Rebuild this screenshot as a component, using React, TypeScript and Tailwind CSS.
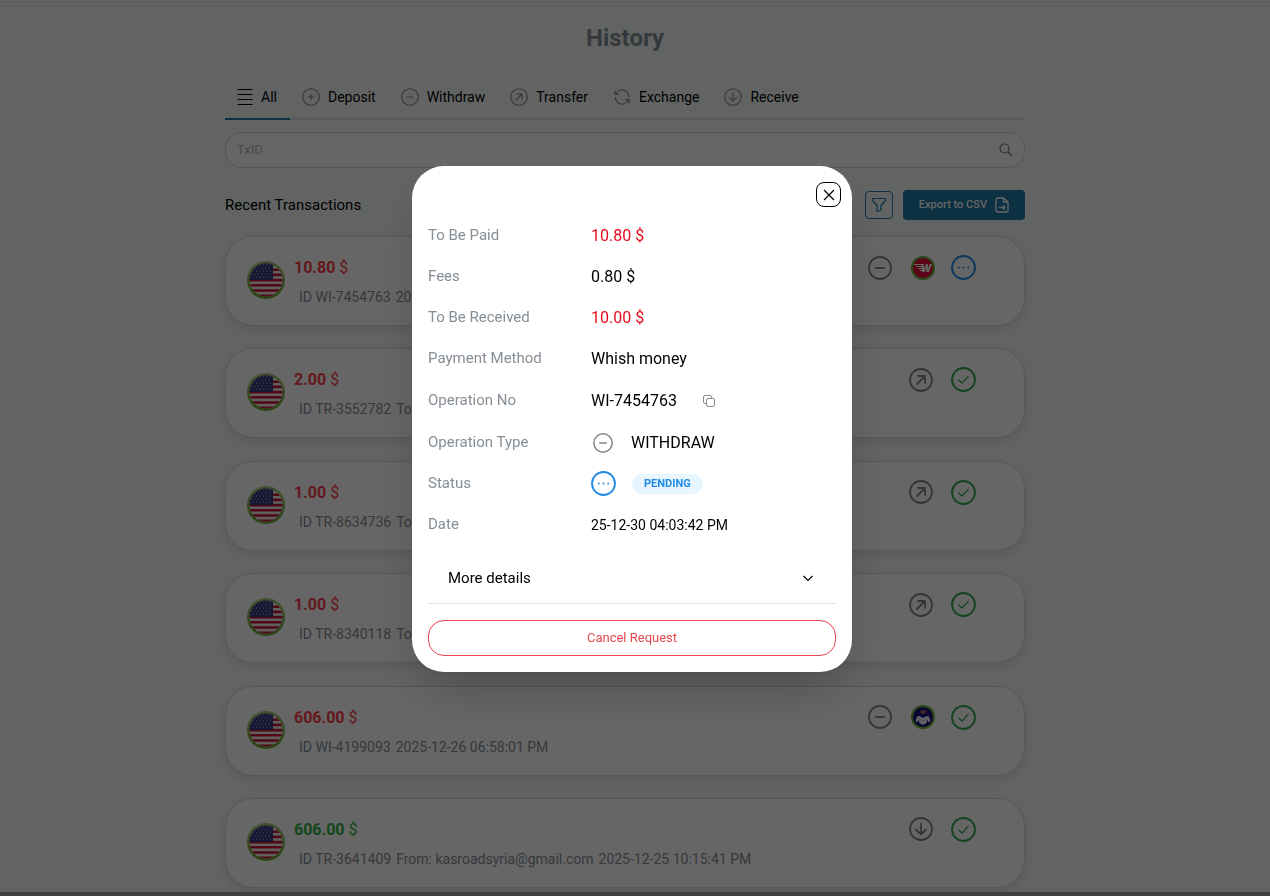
import type { ReactNode } from "react";
import { clsx } from "clsx";

type IconProps = { className?: string };

function Ring({ className, weight = 1.5, children }: IconProps & { weight?: number; children: ReactNode }) {
  return (
    <svg
      viewBox="0 0 24 24"
      className={className}
      fill="none"
      stroke="currentColor"
      strokeWidth={weight}
      strokeLinecap="round"
      strokeLinejoin="round"
      aria-hidden="true"
    >
      <circle cx="12" cy="12" r="11" />
      {children}
    </svg>
  );
}

const glyphs = {
  plus: <path d="M8 12h8M12 8v8" />,
  minus: <path d="M8 12h8" />,
  upRight: <path d="M8 16l8-8M9 8h7v7" />,
  down: <path d="M12 6.5v11M7 12.5l5 5 5-5" />,
};

type Glyph = keyof typeof glyphs;

function MenuIcon() {
  return (
    <svg viewBox="0 0 16 18" className="h-[18px] w-4" fill="none" stroke="#000" strokeWidth="1.2" aria-hidden="true">
      <path d="M.5 1.5h15M.5 6.5h15M.5 11.5h15M.5 16.5h15" />
    </svg>
  );
}

function ExchangeIcon() {
  return (
    <svg
      viewBox="0 0 18 18"
      className="size-[18px] text-[#868686]"
      fill="none"
      stroke="currentColor"
      strokeWidth="1.2"
      aria-hidden="true"
    >
      <path d="M3 6A6.500 6.500 0 0 1 15.500 9M15 12A6.500 6.500 0 0 1 2.500 9M2 2.500V6.500h4M16 15.500v-4h-4" />
    </svg>
  );
}

function FlagIcon() {
  return (
    <svg viewBox="0 0 40 40" className="size-10 shrink-0" role="img" aria-label="USD">
      <defs>
        <clipPath id="flag">
          <circle cx="20" cy="20" r="16.500" />
        </clipPath>
        <linearGradient id="rim" x1="0" y1="0" x2="0" y2="1">
          <stop offset="0" stopColor="#a4cf78" />
          <stop offset="1" stopColor="#63a82c" />
        </linearGradient>
      </defs>
      <circle cx="20" cy="20" r="19" fill="url(#rim)" />
      <g clipPath="url(#flag)">
        <rect width="40" height="40" fill="#f0f0f0" />
        <path
          d="M0 4.500h40M0 9.700h40M0 14.900h40M0 20.100h40M0 25.300h40M0 30.500h40M0 35.700h40"
          stroke="#c81632"
          strokeWidth="2.600"
        />
        <path d="M0 0h27v20H0z" fill="#3b3a82" />
        <path
          d="M3 5h23M5 8h21M3 11h23M5 14h21M3 17h23"
          stroke="#c4c4dc"
          strokeWidth="1"
          strokeDasharray="1 2.500"
        />
      </g>
    </svg>
  );
}

function WhishLogo() {
  return (
    <svg viewBox="0 0 24 24" className="size-6" role="img" aria-label="Whish money">
      <circle cx="12" cy="12" r="12" fill="#6bb03a" />
      <circle cx="12" cy="12" r="10" fill="#e0113c" />
      <path d="M10.500 8h2.200l.3 5 2-5h1.800l.2 5 1.700-5H21l-3.200 8h-2.300l-.3-4-1.700 4h-2.300z" fill="#fff" />
      <path d="M3 8.500h8M5 10.500h6M7 12.500h4M9 14.500h2" stroke="#fff" strokeWidth="1.1" />
    </svg>
  );
}

function ShamLogo() {
  return (
    <svg viewBox="0 0 24 24" className="size-6" role="img" aria-label="Sham cash">
      <circle cx="12" cy="12" r="12" fill="#6bb03a" />
      <circle cx="12" cy="12" r="10" fill="#17107a" />
      <path d="M9.500 5l2 1 3-1.500.5 3-3 2-2.500-1.500z" fill="#b5656b" />
      <path d="M4.500 16.500l1.500-5 3-.5 1.500 1.500h3L15 11l3 .5 1.500 5-2 .5-1-2-1 3-3.500 2-3.500-2-1-3-1 2z" fill="#fff" />
      <path d="M8 13.500l1 3M16 13.500l-1 3M10 14.500l2 1.500 2-1.500" fill="none" stroke="#8d8ab8" strokeWidth=".7" />
    </svg>
  );
}

function StatusIcon({ status }: { status: "pending" | "done" }) {
  if (status === "pending") {
    return (
      <Ring className="size-[25px] text-[#228be6]" weight={1.8}>
        <path d="M7.500 12h.01M12 12h.01M16.500 12h.01" />
      </Ring>
    );
  }
  return (
    <Ring className="size-[25px] text-[#2fa84f]" weight={1.8}>
      <path d="M7.500 12.500l3 3 6-6.500" strokeWidth="1.2" />
    </Ring>
  );
}

const tabs: { label: string; glyph?: Glyph }[] = [
  { label: "All" },
  { label: "Deposit", glyph: "plus" },
  { label: "Withdraw", glyph: "minus" },
  { label: "Transfer", glyph: "upRight" },
  { label: "Exchange" },
  { label: "Receive", glyph: "down" },
];

type Transaction = {
  id: string;
  amount: string;
  party?: string;
  date?: string;
  glyph: Glyph;
  status: "pending" | "done";
  incoming?: boolean;
  logo?: ReactNode;
};

const transactions: Transaction[] = [
  { id: "WI-7454763", amount: "10.80", date: "2025-12-30 04:03:42 PM", glyph: "minus", status: "pending", logo: <WhishLogo /> },
  { id: "TR-3552782", amount: "2.00", party: "To:", glyph: "upRight", status: "done" },
  { id: "TR-8634736", amount: "1.00", party: "To:", glyph: "upRight", status: "done" },
  { id: "TR-8340118", amount: "1.00", party: "To:", glyph: "upRight", status: "done" },
  { id: "WI-4199093", amount: "606.00", date: "2025-12-26 06:58:01 PM", glyph: "minus", status: "done", logo: <ShamLogo /> },
  { id: "TR-3641409", amount: "606.00", party: "From: kasroadsyria@gmail.com", date: "2025-12-25 10:15:41 PM", glyph: "down", status: "done", incoming: true },
];

function TransactionCard({ item }: { item: Transaction }) {
  return (
    <li className="flex h-[90px] rounded-[28px] border border-[#d5d9dd] bg-white pt-[18px] pr-12 pl-5 shadow-[0_4px_12px_rgba(0,0,0,0.1)]">
      <div className="pt-[5px]">
        <FlagIcon />
      </div>
      <div className="ml-2 min-w-0 flex-1">
        <p className={clsx("text-base leading-[26px]", item.incoming ? "text-[#2fb344]" : "text-[#fa3c46]")}>
          <span className="font-bold">{item.amount}</span> $
        </p>
        <p className="mt-1.5 ml-[5px] flex gap-[5px] text-sm leading-5 whitespace-nowrap text-[#868e96]">
          <span>ID {item.id}</span>
          {item.party && <span>{item.party}</span>}
          {item.date && <span>{item.date}</span>}
        </p>
      </div>
      <div className="flex h-[25px] items-center">
        <Ring className="size-6 text-[#868686]" weight={1.8}>{glyphs[item.glyph]}</Ring>
        {item.logo && <span className="ml-[19px]">{item.logo}</span>}
        <span className={item.logo ? "ml-4" : "ml-[18px]"}>
          <StatusIcon status={item.status} />
        </span>
      </div>
    </li>
  );
}

function DetailRow({ label, tall, children }: { label: string; tall?: boolean; children: ReactNode }) {
  return (
    <div className={clsx("flex items-center", tall ? "h-[43px]" : "h-[41px]")}>
      <dt className="w-[163px] text-[15px] text-[#868e96]">{label}</dt>
      <dd className="flex items-center">{children}</dd>
    </div>
  );
}

function DetailsModal() {
  return (
    <div className="fixed inset-0 z-10 flex items-center justify-center bg-black/60 pr-1.5 pb-[58px]">
      <div
        role="dialog"
        aria-modal="true"
        aria-label="Transaction details"
        className="w-[440px] rounded-[32px] bg-white p-4 text-base text-black shadow-2xl"
      >
        <div className="-mr-[5px] flex justify-end">
          <button
            type="button"
            aria-label="Close"
            className="flex size-[25px] items-center justify-center rounded-lg border border-black"
          >
            <svg viewBox="0 0 12 12" className="size-3" stroke="#000" strokeWidth="1.2" aria-hidden="true">
              <path d="M1 1l10 10M11 1L1 11" />
            </svg>
          </button>
        </div>
        <dl className="mt-2">
          <DetailRow label="To Be Paid">
            <span className="text-[#e60a1e]">10.80 $</span>
          </DetailRow>
          <DetailRow label="Fees">0.80 $</DetailRow>
          <DetailRow label="To Be Received">
            <span className="text-[#e60a1e]">10.00 $</span>
          </DetailRow>
          <DetailRow label="Payment Method">Whish money</DetailRow>
          <DetailRow label="Operation No" tall>
            WI-7454763
            <button type="button" aria-label="Copy" className="ml-[25px] text-[#868e96]">
              <svg viewBox="0 0 14 14" className="size-3.5" fill="none" stroke="currentColor" aria-hidden="true">
                <rect x="4.500" y="4.500" width="8" height="8" rx="1.500" />
                <path d="M4.500 9.500H3A1.500 1.500 0 0 1 1.500 8V3A1.500 1.500 0 0 1 3 1.500h5A1.500 1.500 0 0 1 9.500 3v1.500" />
              </svg>
            </button>
          </DetailRow>
          <DetailRow label="Operation Type">
            <Ring className="mr-[18px] ml-0.5 size-5 text-[#868686]" weight={1.8}>{glyphs.minus}</Ring>
            WITHDRAW
          </DetailRow>
          <DetailRow label="Status">
            <StatusIcon status="pending" />
            <span className="ml-4 rounded-full bg-[#e7f5ff] px-3 text-[11px] leading-5 font-bold text-[#228be6]">
              PENDING
            </span>
          </DetailRow>
          <DetailRow label="Date">
            <span className="text-sm">25-12-30 04:03:42 PM</span>
          </DetailRow>
        </dl>
        <button
          type="button"
          className="mt-2 flex h-[51px] w-full items-center justify-between border-b border-[#dee2e6] px-5 text-[15px]"
        >
          More details
          <svg viewBox="0 0 16 16" className="size-4" fill="none" stroke="#000" strokeWidth="1.2" aria-hidden="true">
            <path d="M3.500 6L8 10.500 12.500 6" />
          </svg>
        </button>
        <button type="button" className="mt-4 h-9 w-full rounded-2xl border border-[#e5484d] text-[13px] text-[#e5484d]">
          Cancel Request
        </button>
      </div>
    </div>
  );
}

export default function App() {
  return (
    <div className="h-screen overflow-hidden bg-[#f5fafa] pt-px font-[Roboto,sans-serif] text-black">
      <header className="h-1.5 border-y border-t-[#dee2e6] border-b-[#eef2f3]" />
      <main className="mx-auto w-full max-w-[820px] pt-[11px] pr-5">
        <h1 className="text-center text-2xl leading-10 font-bold text-[#868e96]">History</h1>
        <nav className="mt-[17px] flex h-[45px] border-b-2 border-[#dee2e6]" aria-label="Transaction types">
          {tabs.map((tab) => (
            <button
              key={tab.label}
              type="button"
              className={clsx(
                "-mb-0.5 flex items-center gap-2 border-b-2 pr-[13px] pl-3 text-sm",
                tab.label === "All" ? "border-[#1c7ba8]" : "border-transparent"
              )}
            >
              {tab.label === "All" && <MenuIcon />}
              {tab.label === "Exchange" && <ExchangeIcon />}
              {tab.glyph && <Ring className="size-[18px] text-[#868686]">{glyphs[tab.glyph]}</Ring>}
              {tab.label}
            </button>
          ))}
        </nav>
        <div className="mt-3 flex h-9 items-center rounded-2xl border border-[#ced4da] bg-white pr-[11px] pl-[11px]">
          <input aria-label="TxID" placeholder="TxID" className="flex-1 text-[13px] outline-none placeholder:text-[#adb5bd]" />
          <svg viewBox="0 0 14 14" className="size-3.5 text-[#777]" fill="none" stroke="currentColor" strokeWidth="1.2" aria-hidden="true">
            <circle cx="5.500" cy="5.500" r="4.500" />
            <path d="M9 9L13 13" />
          </svg>
        </div>
        <div className="mt-[22px] flex h-[30px] items-center">
          <h2 className="flex-1 text-[15px]">Recent Transactions</h2>
          <button
            type="button"
            aria-label="Filter"
            className="mr-2.5 flex size-7 items-center justify-center rounded border border-[#1c7ba8] text-[#1c7ba8]"
          >
            <svg viewBox="0 0 16 16" className="size-4" fill="none" stroke="currentColor" strokeWidth="1.2" strokeLinejoin="round" aria-hidden="true">
              <path d="M1.500 1.500h13v2L10 8.500v4.500l-4 1.500v-6L1.500 3.500z" />
            </svg>
          </button>
          <button type="button" className="flex h-[30px] items-center gap-2 rounded bg-[#1c7ba8] px-4 text-[11px] font-medium text-white">
            Export to CSV
            <svg viewBox="0 0 14 16" className="h-4 w-3.5" fill="none" stroke="currentColor" strokeWidth="1.300" strokeLinejoin="round" aria-hidden="true">
              <path d="M2.500 1h6L13 5v8.500a1.500 1.500 0 0 1-1.500 1.500h-9A1.500 1.500 0 0 1 1 13.500v-11A1.500 1.500 0 0 1 2.500 1zM8.500 1v4H13M4 10.500h6M8 8.500l2 2-2 2" />
            </svg>
          </button>
        </div>
        <ul className="mt-4 grid h-[652px] content-between">
          {transactions.map((item) => (
            <TransactionCard key={item.id} item={item} />
          ))}
        </ul>
      </main>
      <div className="fixed inset-x-0 bottom-0 h-1 bg-[#a0a0a0]" />
      <DetailsModal />
    </div>
  );
}
